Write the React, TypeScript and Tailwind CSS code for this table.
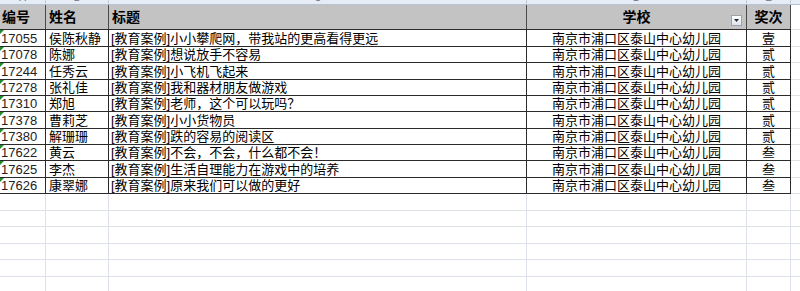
import React from 'react';

interface Entry {
  id: string;
  name: string;
  title: string;
  school: string;
  prize: string;
}

const SCHOOL = '南京市浦口区泰山中心幼儿园';

const entries: Entry[] = [
  { id: '17055', name: '侯陈秋静', title: '[教育案例]小小攀爬网，带我站的更高看得更远', school: SCHOOL, prize: '壹' },
  { id: '17078', name: '陈娜', title: '[教育案例]想说放手不容易', school: SCHOOL, prize: '贰' },
  { id: '17244', name: '任秀云', title: '[教育案例]小飞机飞起来', school: SCHOOL, prize: '贰' },
  { id: '17278', name: '张礼佳', title: '[教育案例]我和器材朋友做游戏', school: SCHOOL, prize: '贰' },
  { id: '17310', name: '郑旭', title: '[教育案例]老师，这个可以玩吗？', school: SCHOOL, prize: '贰' },
  { id: '17378', name: '曹莉芝', title: '[教育案例]小小货物员', school: SCHOOL, prize: '贰' },
  { id: '17380', name: '解珊珊', title: '[教育案例]跌的容易的阅读区', school: SCHOOL, prize: '贰' },
  { id: '17622', name: '黄云', title: '[教育案例]不会，不会，什么都不会！', school: SCHOOL, prize: '叁' },
  { id: '17625', name: '李杰', title: '[教育案例]生活自理能力在游戏中的培养', school: SCHOOL, prize: '叁' },
  { id: '17626', name: '康翠娜', title: '[教育案例]原来我们可以做的更好', school: SCHOOL, prize: '叁' },
];

// row heights roughly follow the 16.4px pitch of the sheet
const rowHeights = ['h-[17px]', 'h-[16px]', 'h-[17px]', 'h-[16px]', 'h-[16px]', 'h-[17px]', 'h-[16px]', 'h-[16px]', 'h-[17px]', 'h-[16px]'];
const emptyHeights = ['h-[17px]', 'h-[16px]', 'h-[17px]', 'h-[16px]', 'h-[17px]', 'h-[16px]'];

function DropdownButton() {
  return (
    <div className="absolute right-[4px] top-[10px] flex h-[11px] w-[11px] items-center justify-center border border-[#9aa3ae] bg-gradient-to-b from-white to-[#dfe5ec]">
      <svg width="5" height="3" viewBox="0 0 5 3">
        <path d="M0 0h5L2.5 3z" fill="#1f2937" />
      </svg>
    </div>
  );
}

// Excel's "number stored as text" corner marker
function NumberMark() {
  return (
    <div className="absolute left-0 top-0 h-0 w-0 border-r-[4px] border-t-[4px] border-r-transparent border-t-[#1e8c2e]" />
  );
}

export default function App() {
  return (
    <div
      className="h-[291px] w-[800px] overflow-hidden bg-white text-[13px] text-black"
      style={{ fontFamily: '"Liberation Sans", "Noto Sans CJK SC", sans-serif' }}
    >
      {/* column letter strip, mostly scrolled out of view */}
      <div className="flex h-[5px] border-b border-[#b7c3d3] bg-[#e6edf6] text-[10px] leading-[12px] text-[#6b7280]">
        {[
          ['A', 'w-[46px]'],
          ['B', 'w-[63px]'],
          ['C', 'w-[418px]'],
          ['D', 'w-[220px]'],
          ['E', 'w-[44px]'],
        ].map(([l, w]) => (
          <div key={l} className={`${w} overflow-hidden border-r border-[#c3ccd9] text-center`}>
            <div className="-mt-[8px]">{l}</div>
          </div>
        ))}
      </div>

      {/* header row */}
      <div className="flex h-[25px] text-[14px] font-bold">
        <div className="flex w-[791px] border-b border-[#2a2a2a] bg-[#c3c3c3]">
          <div className="flex w-[46px] items-center border-r border-[#4a4a4a] pl-[2px]">编号</div>
          <div className="flex w-[63px] items-center border-r border-[#4a4a4a] pl-[3px]">姓名</div>
          <div className="flex w-[418px] items-center border-r border-[#4a4a4a] pl-[3px]">标题</div>
          <div className="relative flex w-[220px] items-center justify-center border-r border-[#4a4a4a]">
            学校
            <DropdownButton />
          </div>
          <div className="flex w-[44px] items-center justify-center border-r border-[#4a4a4a]">奖次</div>
        </div>
        <div className="flex-1 border-b border-[#dde2ea]" />
      </div>

      {/* data rows */}
      {entries.map((e, i) => (
        <div key={e.id} className={`flex ${rowHeights[i]} leading-none`}>
          <div className="flex w-[791px] border-b border-[#2a2a2a]">
            <div className="relative flex w-[46px] items-center border-r border-[#2a2a2a] pl-[1px] text-[#222]">
              <NumberMark />
              {e.id}
            </div>
            <div className="flex w-[63px] items-center border-r border-[#2a2a2a] pl-[3px]">{e.name}</div>
            <div className="flex w-[418px] items-center border-r border-[#2a2a2a] pl-[2px]">{e.title}</div>
            <div className="flex w-[220px] items-center justify-center border-r border-[#2a2a2a]">{e.school}</div>
            <div className="flex w-[44px] items-center justify-center border-r border-[#2a2a2a]">{e.prize}</div>
          </div>
          <div className="flex-1 border-b border-[#dde2ea]" />
        </div>
      ))}

      {/* empty grid below */}
      {emptyHeights.map((h, i) => (
        <div key={i} className={`flex ${h} border-b border-[#dde2ea]`}>
          <div className="w-[46px] border-r border-[#dde2ea]" />
          <div className="w-[63px] border-r border-[#dde2ea]" />
          <div className="w-[418px] border-r border-[#dde2ea]" />
          <div className="w-[220px] border-r border-[#dde2ea]" />
          <div className="w-[44px] border-r border-[#dde2ea]" />
        </div>
      ))}
    </div>
  );
}
